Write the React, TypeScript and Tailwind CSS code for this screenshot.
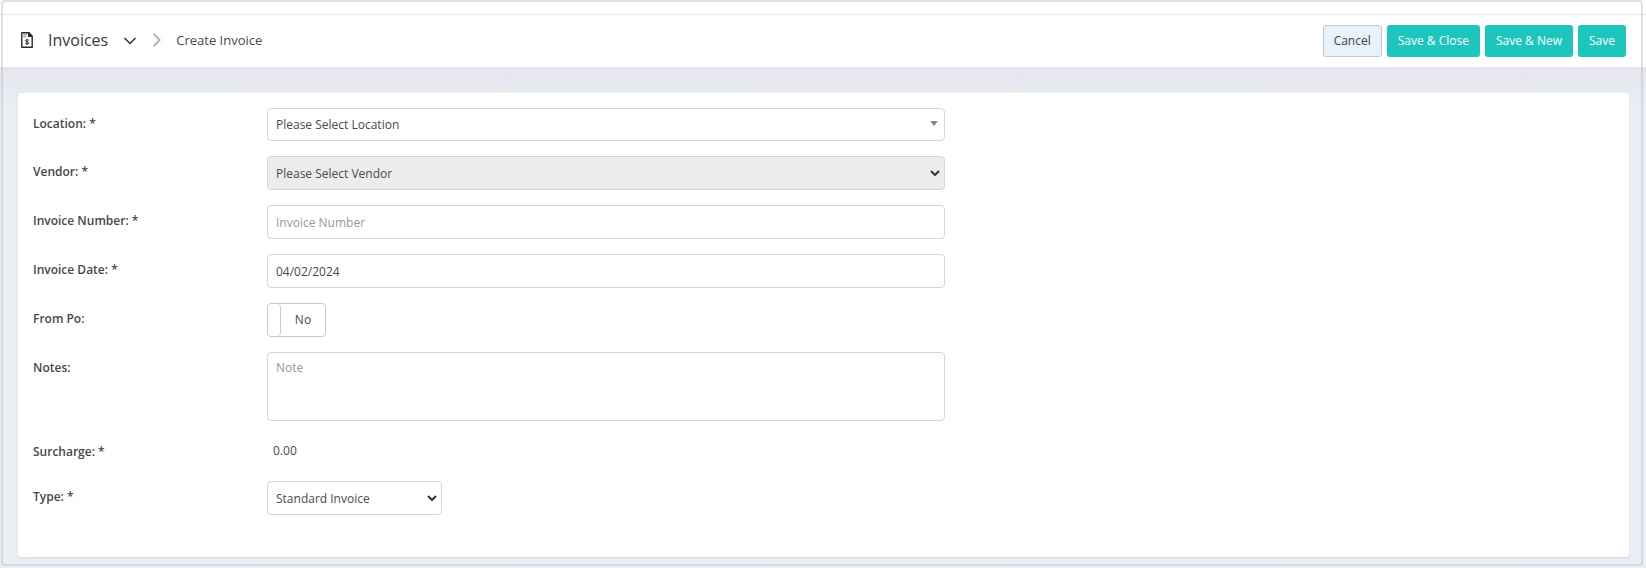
import React, { useState } from 'react'
import { ChevronDown, ChevronRight } from 'lucide-react'

const controlClass =
  'block w-full h-[34px] px-2 rounded border border-[#d6d6d8] bg-white text-[#4a4a4a] placeholder:text-[#999] focus:outline-none focus:border-[#8ab4d8]'

const primaryButtonClass =
  'h-8 px-[11px] rounded-[3px] bg-[#1dc5bd] text-white font-medium hover:bg-[#18b0a9] transition-colors'

interface FieldProps {
  id: string
  label: string
  children: React.ReactNode
}

function Field({ id, label, children }: FieldProps) {
  return (
    <div className="flex items-start">
      <label htmlFor={id} className="w-[234px] shrink-0 pt-[7px] leading-[18px] font-semibold text-[#484848]">
        {label}
      </label>
      <div className="flex-1 max-w-[678px]">{children}</div>
    </div>
  )
}

function InvoiceIcon() {
  return (
    <svg viewBox="0 0 12 16" className="w-3 h-4" fill="none" stroke="#2a2a2a" strokeWidth="1.4">
      <path d="M.8.8h7.2l3.2 3.4v11H.8z" strokeLinejoin="round" />
      <path d="M7.8.8v3.6h3.4" fill="#2a2a2a" />
      <path d="M2.4 2.8h3.2M2.4 4.8h2.4" stroke="#777" strokeWidth="1" />
      <path d="M7.7 8.3C7.2 7.6 4.5 7.5 4.5 8.8c0 1.4 3.2.8 3.2 2.2 0 1.3-2.7 1.3-3.4.4M6 6.8V13" strokeWidth="1" />
    </svg>
  )
}

function SelectArrow() {
  return (
    <svg viewBox="0 0 10 6" className="absolute right-[5px] top-[14px] w-[10px] h-[6px] pointer-events-none" fill="none">
      <path d="M1 1l4 4 4-4" stroke="#333" strokeWidth="2" />
    </svg>
  )
}

export default function App() {
  const [location, setLocation] = useState('')
  const [invoiceNumber, setInvoiceNumber] = useState('')
  const [invoiceDate, setInvoiceDate] = useState('04/02/2024')
  const [fromPo, setFromPo] = useState(false)
  const [notes, setNotes] = useState('')
  const [type, setType] = useState('standard')

  return (
    <div className="relative min-h-screen bg-[#ebedf5] font-['Open_Sans',sans-serif] text-[12px] leading-[18px] text-[#4a4a4a]">
      {/* Header */}
      <div className="h-[14px] bg-white" />
      <header className="flex items-center justify-between h-[53px] px-5 bg-white border-t border-[#e8e8ea]">
        <nav className="flex items-center pl-px pb-[2px]">
          <InvoiceIcon />
          <button className="flex items-center ml-[15px] text-[16px] leading-6 text-[#3a3a3a]">
            Invoices
            <ChevronDown className="w-5 h-5 ml-3 mt-[2px]" strokeWidth={2} />
          </button>
          <ChevronRight className="w-[22px] h-[22px] ml-[6px] text-[#b0b0b4]" strokeWidth={2} />
          <span className="ml-2 text-[13px]">Create Invoice</span>
        </nav>

        <div className="flex items-center gap-[5px]">
          <button className="h-8 px-[10px] rounded-[3px] border border-[#c0c8d4] bg-[#e8f2fc] text-[#444] hover:bg-[#dbeafa] transition-colors">
            Cancel
          </button>
          <button className={primaryButtonClass}>Save &amp; Close</button>
          <button className={primaryButtonClass}>Save &amp; New</button>
          <button className={primaryButtonClass}>Save</button>
        </div>
      </header>

      {/* Invoice form */}
      <div className="pl-[18px] pr-[17px] pb-[10px] pt-[26px] bg-linear-to-b from-[#e4e5ee] to-[#ebedf5] to-[40px]">
        <form className="flex flex-col gap-[15px] px-[15px] pt-[15px] pb-[42px] rounded-[3px] bg-white shadow-[0_1px_2px_rgba(60,60,100,0.1)]">
          <Field id="location" label="Location: *">
            <div className="relative">
              <select
                id="location"
                value={location}
                onChange={(e) => setLocation(e.target.value)}
                className="block w-full h-[33px] px-2 rounded border border-[#d6d6d8] bg-white appearance-none"
              >
                <option value="">Please Select Location</option>
              </select>
              <svg viewBox="0 0 8 5" className="absolute right-[7px] top-[13px] w-2 h-[5px] pointer-events-none">
                <path d="M0 0h8L4 5z" fill="#888" />
              </svg>
            </div>
          </Field>

          <Field id="vendor" label="Vendor: *">
            <div className="relative">
              <select
                id="vendor"
                disabled
                className="block w-full h-[34px] px-2 pt-px rounded border border-[#d6d6d8] bg-[#ececec] appearance-none opacity-100"
              >
                <option>Please Select Vendor</option>
              </select>
              <SelectArrow />
            </div>
          </Field>

          <Field id="invoiceNumber" label="Invoice Number: *">
            <input
              id="invoiceNumber"
              type="text"
              placeholder="Invoice Number"
              value={invoiceNumber}
              onChange={(e) => setInvoiceNumber(e.target.value)}
              className={controlClass}
            />
          </Field>

          <Field id="invoiceDate" label="Invoice Date: *">
            <input
              id="invoiceDate"
              type="text"
              value={invoiceDate}
              onChange={(e) => setInvoiceDate(e.target.value)}
              className={controlClass}
            />
          </Field>

          <Field id="fromPo" label="From Po:">
            <button
              id="fromPo"
              type="button"
              role="switch"
              aria-checked={fromPo}
              onClick={() => setFromPo(!fromPo)}
              className="flex w-[59px] h-[34px] rounded border border-[#c8c8ca] bg-white overflow-hidden"
            >
              <span className="w-[13px] h-full rounded-r border-r border-[#c8c8ca]" />
              <span className="flex-1 self-center">{fromPo ? 'Yes' : 'No'}</span>
            </button>
          </Field>

          <Field id="notes" label="Notes:">
            <textarea
              id="notes"
              placeholder="Note"
              value={notes}
              onChange={(e) => setNotes(e.target.value)}
              className="block w-full h-[69px] px-2 py-[6px] rounded border border-[#d6d6d8] bg-white placeholder:text-[#999] resize-none focus:outline-none focus:border-[#8ab4d8]"
            />
          </Field>

          <Field id="surcharge" label="Surcharge: *">
            <output id="surcharge" className="block h-[30px] pl-[6px] pt-[6px]">
              0.00
            </output>
          </Field>

          <Field id="type" label="Type: *">
            <div className="relative w-[175px]">
              <select
                id="type"
                value={type}
                onChange={(e) => setType(e.target.value)}
                className="block w-full h-[34px] px-2 pt-px rounded border border-[#d6d6d8] bg-white appearance-none"
              >
                <option value="standard">Standard Invoice</option>
              </select>
              <SelectArrow />
            </div>
          </Field>
        </form>
      </div>

      {/* Window frame */}
      <div className="absolute top-0 bottom-[2px] left-px right-[3px] rounded-[4px] border-2 border-[#c8cacd]/60 pointer-events-none" />
    </div>
  )
}
